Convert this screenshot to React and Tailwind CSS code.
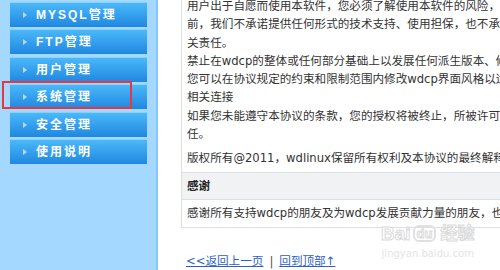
import React from 'react';

const menu = ['MYSQL管理', 'FTP管理', '用户管理', '系统管理', '安全管理', '使用说明'];

const para = [
  '用户出于自愿而使用本软件，您必须了解使用本软件的风险，在尚未购买产品技术服务之',
  '前，我们不承诺提供任何形式的技术支持、使用担保，也不承担任何因使用本软件而产生问题的相',
  '关责任。',
  '禁止在wdcp的整体或任何部分基础上以发展任何派生版本、修改版本或第三方版本用于重新分发。',
  '您可以在协议规定的约束和限制范围内修改wdcp界面风格以适应您的网站要求，但须保留版权信息及',
  '相关连接',
  '如果您未能遵守本协议的条款，您的授权将被终止，所被许可的权利将被收回，并承担相应法律责',
  '任。',
];

const MenuButton = ({ label }) => (
  <div className="h-[25px] w-[137px] flex items-center border-t border-[#86d2fd] bg-gradient-to-b from-[#4ab8f9] to-[#1f87e0]">
    <span className="ml-[13px] w-0 h-0 border-y-[3.5px] border-y-transparent border-l-[4px] border-l-[#b9d9f3]" />
    <span className="ml-[9px] text-white font-bold text-[12px] tracking-[2px] leading-none">{label}</span>
  </div>
);

const App = () => {
  return (
    <div
      className="relative w-[500px] h-[270px] overflow-hidden bg-white flex"
      style={{ fontFamily: '"DejaVu Sans", "Noto Sans CJK SC", sans-serif' }}
    >
      {/* left menu */}
      <div
        className="w-[158px] shrink-0 h-full bg-[#a4d8fe] border-r-2 border-[#87c7f1] pl-[10px] pt-[2px] flex flex-col gap-[2.4px]"
        style={{ fontFamily: '"Liberation Sans", "Noto Sans CJK SC", sans-serif' }}
      >
        {menu.map((m) => (
          <MenuButton key={m} label={m} />
        ))}
      </div>

      {/* content */}
      <div className="flex-1 pl-[23px] min-w-0">
        <div className="w-[600px] border-l border-b border-[#dcdfe3] text-[11.6px] text-[#333]">
          <div className="pl-[5px] -mt-[3px] pb-[1px]">
            {para.map((l, i) => (
              <div key={i} className="whitespace-nowrap h-[18.3px] leading-[18.3px]">{l}</div>
            ))}
          </div>
          <div className="pl-[5px] h-[28px] flex items-center whitespace-nowrap">
            版权所有@2011，wdlinux保留所有权利及本协议的最终解释权。
          </div>
          <div className="pl-[5px] h-[28px] flex items-center border-t border-b border-[#dcdfe3] bg-[#f1f2f4] font-bold text-[#222]">
            感谢
          </div>
          <div className="pl-[5px] h-[27px] flex items-center whitespace-nowrap">
            感谢所有支持wdcp的朋友及为wdcp发展贡献力量的朋友，也感谢所有使用wdcp的用户。
          </div>
        </div>
        <div className="mt-[25px] pl-[5px] text-[11.6px] flex items-center gap-[6px] whitespace-nowrap">
          <a href="#" className="text-[#2b5fc4] underline">&lt;&lt;返回上一页</a>
          <span className="text-[#555]">|</span>
          <a href="#" className="text-[#2b5fc4] underline">回到顶部↑</a>
        </div>
      </div>

      {/* highlight box */}
      <div className="absolute left-[2px] top-[81px] w-[130px] h-[28px] border-2 border-[#e8383d]" />

      {/* watermark */}
      <div className="absolute left-[381px] top-[224px] flex flex-col items-center text-[#e2e2e2] pointer-events-none">
        <div className="flex items-center gap-[2px] leading-none" style={{ fontFamily: '"Liberation Sans", "Noto Sans CJK SC", sans-serif' }}>
          <span className="text-[19px] font-bold text-white" style={{ WebkitTextStroke: '1px #dadada' }}>Bai</span>
          <span className="px-[2px] rounded-[6px] border-2 border-[#e0e0e0] text-[13px] font-bold text-white" style={{ WebkitTextStroke: '1px #dadada' }}>du</span>
          <span className="text-[17px] font-bold text-white ml-[2px]" style={{ WebkitTextStroke: '1px #dadada' }}>经验</span>
        </div>
        <span className="text-[10px] mt-[3px] text-[#e4e4e4]">jingyan.baidu.com</span>
      </div>
    </div>
  );
};

export default App;
